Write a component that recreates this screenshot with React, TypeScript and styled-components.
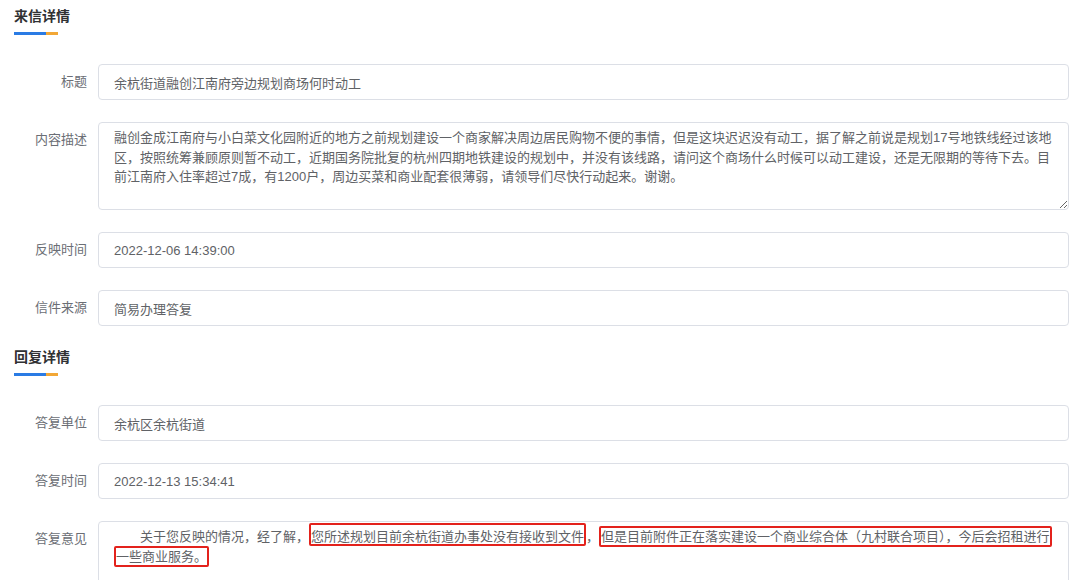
import React from 'react';
import styled, { createGlobalStyle } from 'styled-components';

const GlobalStyle = createGlobalStyle`
    html, body {
        margin: 0;
        padding: 0;
        background: #ffffff;
    }
    body {
        font-family: "Liberation Sans", "Noto Sans CJK SC", sans-serif;
        color: #606266;
    }
    * {
        box-sizing: border-box;
    }
`

const letter = {
    title: '余杭街道融创江南府旁边规划商场何时动工',
    content: '融创金成江南府与小白菜文化园附近的地方之前规划建设一个商家解决周边居民购物不便的事情，但是这块迟迟没有动工，据了解之前说是规划17号地铁线经过该地区，按照统筹兼顾原则暂不动工，近期国务院批复的杭州四期地铁建设的规划中，并没有该线路，请问这个商场什么时候可以动工建设，还是无限期的等待下去。目前江南府入住率超过7成，有1200户，周边买菜和商业配套很薄弱，请领导们尽快行动起来。谢谢。',
    time: '2022-12-06 14:39:00',
    source: '简易办理答复',
}

const reply = {
    unit: '余杭区余杭街道',
    time: '2022-12-13 15:34:41',
}

function SectionHeader({ title, first }: { title: string; first?: boolean }) {
    return (
        <Header $first={first}>
            <h3>{title}</h3>
            <Bar>
                <span className="blue" />
                <span className="orange" />
            </Bar>
        </Header>
    )
}

function Field({ label, children }: { label: string; children: React.ReactNode }) {
    return (
        <Row>
            <Label>{label}</Label>
            <Control>{children}</Control>
        </Row>
    )
}

export default function App() {
    return (
        <>
            <GlobalStyle />
            <Page>
                <SectionHeader title="来信详情" first />
                <Form>
                    <Field label="标题">
                        <Input readOnly value={letter.title} />
                    </Field>
                    <Field label="内容描述">
                        <TextArea readOnly value={letter.content} rows={4} />
                    </Field>
                    <Field label="反映时间">
                        <Input readOnly value={letter.time} />
                    </Field>
                    <Field label="信件来源">
                        <Input readOnly value={letter.source} />
                    </Field>
                </Form>

                <SectionHeader title="回复详情" />
                <Form>
                    <Field label="答复单位">
                        <Input readOnly value={reply.unit} />
                    </Field>
                    <Field label="答复时间">
                        <Input readOnly value={reply.time} />
                    </Field>
                    <Field label="答复意见">
                        <RichBox>
                            关于您反映的情况，经了解，<Mark $lift>您所述规划目前余杭街道办事处没有接收到文件</Mark>，<Mark>但是目前附件正在落实建设一个商业综合体（九村联合项目），今后会招租进行一些商业服务。</Mark>
                        </RichBox>
                    </Field>
                </Form>
            </Page>
        </>
    )
}

const Page = styled.div`
    width: 1080px;
    padding: 6px 11px 0 14px;
`

const Header = styled.div<{ $first?: boolean }>`
    margin-top: ${p => (p.$first ? '0' : '21px')};
    margin-bottom: 29px;
    h3 {
        margin: 0;
        font-size: 14px;
        line-height: 20px;
        font-weight: 700;
        color: #303133;
    }
`

const Bar = styled.div`
    display: flex;
    margin-top: 6px;
    height: 3px;
    .blue {
        width: 32px;
        background: #2a7be4;
    }
    .orange {
        width: 12px;
        background: #f2a735;
    }
`

const Form = styled.div`
    display: flex;
    flex-direction: column;
    gap: 22px;
`

const Row = styled.div`
    display: flex;
    align-items: flex-start;
`

const Label = styled.label`
    flex: 0 0 84px;
    padding-right: 11px;
    text-align: right;
    font-size: 13px;
    line-height: 36px;
    color: #6b6e75;
`

const Control = styled.div`
    flex: 1;
    min-width: 0;
`

const Input = styled.input`
    display: block;
    width: 100%;
    height: 36px;
    padding: 0 15px;
    border: 1px solid #dcdfe6;
    border-radius: 4px;
    background: #fff;
    font-family: inherit;
    font-size: 13px;
    color: #606266;
    outline: none;
`

const TextArea = styled.textarea`
    display: block;
    width: 100%;
    height: 88px;
    padding: 5px 15px;
    border: 1px solid #dcdfe6;
    border-radius: 4px;
    background: #fff;
    font-family: inherit;
    font-size: 13px;
    line-height: 1.5;
    color: #606266;
    resize: vertical;
    outline: none;
`

const RichBox = styled.div`
    min-height: 88px;
    padding: 5px 6px 5px 15px;
    border: 1px solid #dcdfe6;
    border-radius: 4px;
    font-size: 13px;
    line-height: 1.5;
    color: #606266;
    text-indent: 2em;
`

const Mark = styled.span<{ $lift?: boolean }>`
    border: 2px solid #e3221c;
    border-radius: 2px;
    padding: ${p => (p.$lift ? '4px 0 0' : '1px 0')};
    -webkit-box-decoration-break: clone;
    box-decoration-break: clone;
`
